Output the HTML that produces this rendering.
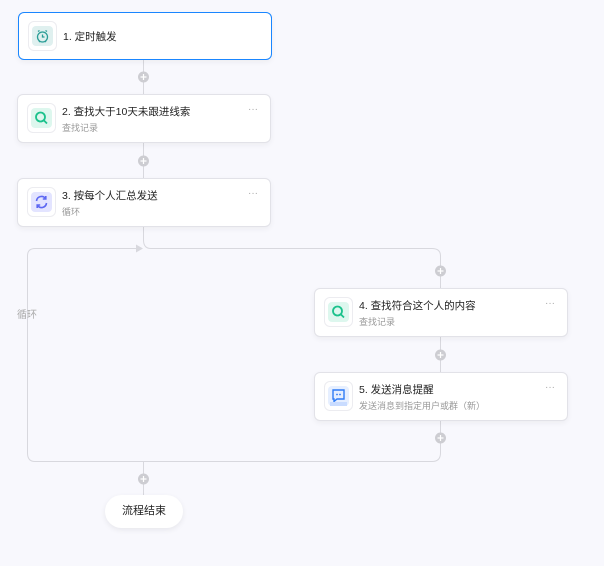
<!DOCTYPE html>
<html><head><meta charset="utf-8"><style>
*{margin:0;padding:0;box-sizing:border-box}
body{width:604px;height:566px;background:#f8f8fd;font-family:"Liberation Sans","Noto Sans CJK SC",sans-serif;position:relative;overflow:hidden}
.card{position:absolute;background:#fff;border:1px solid #e2e2e8;border-radius:6px;box-shadow:0 2px 6px rgba(0,0,0,.05);width:254px;height:49px}
.ib{position:absolute;left:9px;top:8px;width:29px;height:30px;border:1px solid #ececf0;border-radius:6px;background:#fff}
.ii{position:absolute;left:3px;top:4px;width:21px;height:20px;border-radius:4px}
.t{position:absolute;left:44px;top:9px;font-size:10.5px;color:#222;white-space:nowrap}
.s{position:absolute;left:44px;top:26px;font-size:9px;color:#999;white-space:nowrap}
.d{position:absolute;right:12px;top:9px;font-size:10px;color:#aaa}
svg.l{position:absolute;left:0;top:0}
</style></head><body>
<svg class="l" width="604" height="566">
<g stroke="#d8d8de" stroke-width="1" fill="none">
<path d="M143.5 59V94M143.5 143V178M143.5 227V240Q143.5 248.5 151 248.5H432Q440.5 248.5 440.5 256V288M440.5 337V372M440.5 421V453Q440.5 461.5 432 461.5H35Q27.5 461.5 27.5 453V256Q27.5 248.5 35 248.5H138M143.5 461V495"/>
</g>
<path d="M136 244.5L143 248.5L136 252.5Z" fill="#d8d8de"/>
<g fill="#cdcdd2">
<circle cx="143.5" cy="77" r="5.5"/><circle cx="143.5" cy="161" r="5.5"/><circle cx="440.5" cy="271" r="5.5"/><circle cx="440.5" cy="355" r="5.5"/><circle cx="440.5" cy="438" r="5.5"/><circle cx="143.5" cy="479" r="5.5"/>
</g>
<g stroke="#fff" stroke-width="1.2">
<path d="M140.5 77h6M143.5 74v6M140.5 161h6M143.5 158v6M437.5 271h6M440.5 268v6M437.5 355h6M440.5 352v6M437.5 438h6M440.5 435v6M140.5 479h6M143.5 476v6"/>
</g>
</svg>
<div style="position:absolute;left:17px;top:306px;font-size:10px;color:#aaa">循环</div>

<div class="card" style="left:18px;top:12px;height:48px;border:1px solid #1a86ff">
<div class="ib"><div class="ii" style="background:#dff0ef"><svg width="21" height="20"><g stroke="#2a9d96" stroke-width="1.3" fill="none"><circle cx="10.5" cy="11" r="5"/><path d="M10.5 8.5V11H12.5M6 5.5L7.5 4.5M15 5.5L13.5 4.5M7 16l1-1M14 16l-1-1"/></g></svg></div></div>
<div class="t" style="top:16px">1. 定时触发</div>
</div>

<div class="card" style="left:17px;top:94px">
<div class="ib"><div class="ii" style="background:#ddf7ee"><svg width="21" height="20"><g stroke="#1bc28c" stroke-width="1.8" fill="none"><circle cx="9.5" cy="9" r="4.5"/><path d="M13 12.5L16 15.5"/></g></svg></div></div>
<div class="t">2. 查找大于10天未跟进线索</div><div class="s">查找记录</div><div class="d">···</div>
</div>

<div class="card" style="left:17px;top:178px">
<div class="ib"><div class="ii" style="background:#e3e4ff"><svg width="21" height="20"><g stroke="#5c67f2" stroke-width="1.6" fill="none"><path d="M5.5 9a5 5 0 0 1 9-2.5M15.5 11a5 5 0 0 1-9 2.5"/><path d="M14.8 4v3h-3M6.2 16v-3h3"/></g></svg></div></div>
<div class="t">3. 按每个人汇总发送</div><div class="s">循环</div><div class="d">···</div>
</div>

<div class="card" style="left:314px;top:288px">
<div class="ib"><div class="ii" style="background:#ddf7ee"><svg width="21" height="20"><g stroke="#1bc28c" stroke-width="1.8" fill="none"><circle cx="9.5" cy="9" r="4.5"/><path d="M13 12.5L16 15.5"/></g></svg></div></div>
<div class="t">4. 查找符合这个人的内容</div><div class="s">查找记录</div><div class="d">···</div>
</div>

<div class="card" style="left:314px;top:372px">
<div class="ib"><div class="ii" style="background:#e6efff"><svg width="21" height="20"><path d="M5 4h11v9H9l-3 2.5V13H5z" fill="none" stroke="#2f7cf6" stroke-width="1.4"/><circle cx="9" cy="8.5" r=".9" fill="#2f7cf6"/><circle cx="12" cy="8.5" r=".9" fill="#2f7cf6"/><rect x="2" y="16" width="17" height="4" fill="#c9dcff"/></svg></div></div>
<div class="t">5. 发送消息提醒</div><div class="s">发送消息到指定用户或群（新）</div><div class="d">···</div>
</div>

<div style="position:absolute;left:105px;top:495px;width:78px;height:33px;background:#fff;border-radius:17px;box-shadow:0 2px 6px rgba(0,0,0,.07);font-size:11px;color:#222;text-align:center;line-height:33px">流程结束</div>
</body></html>
